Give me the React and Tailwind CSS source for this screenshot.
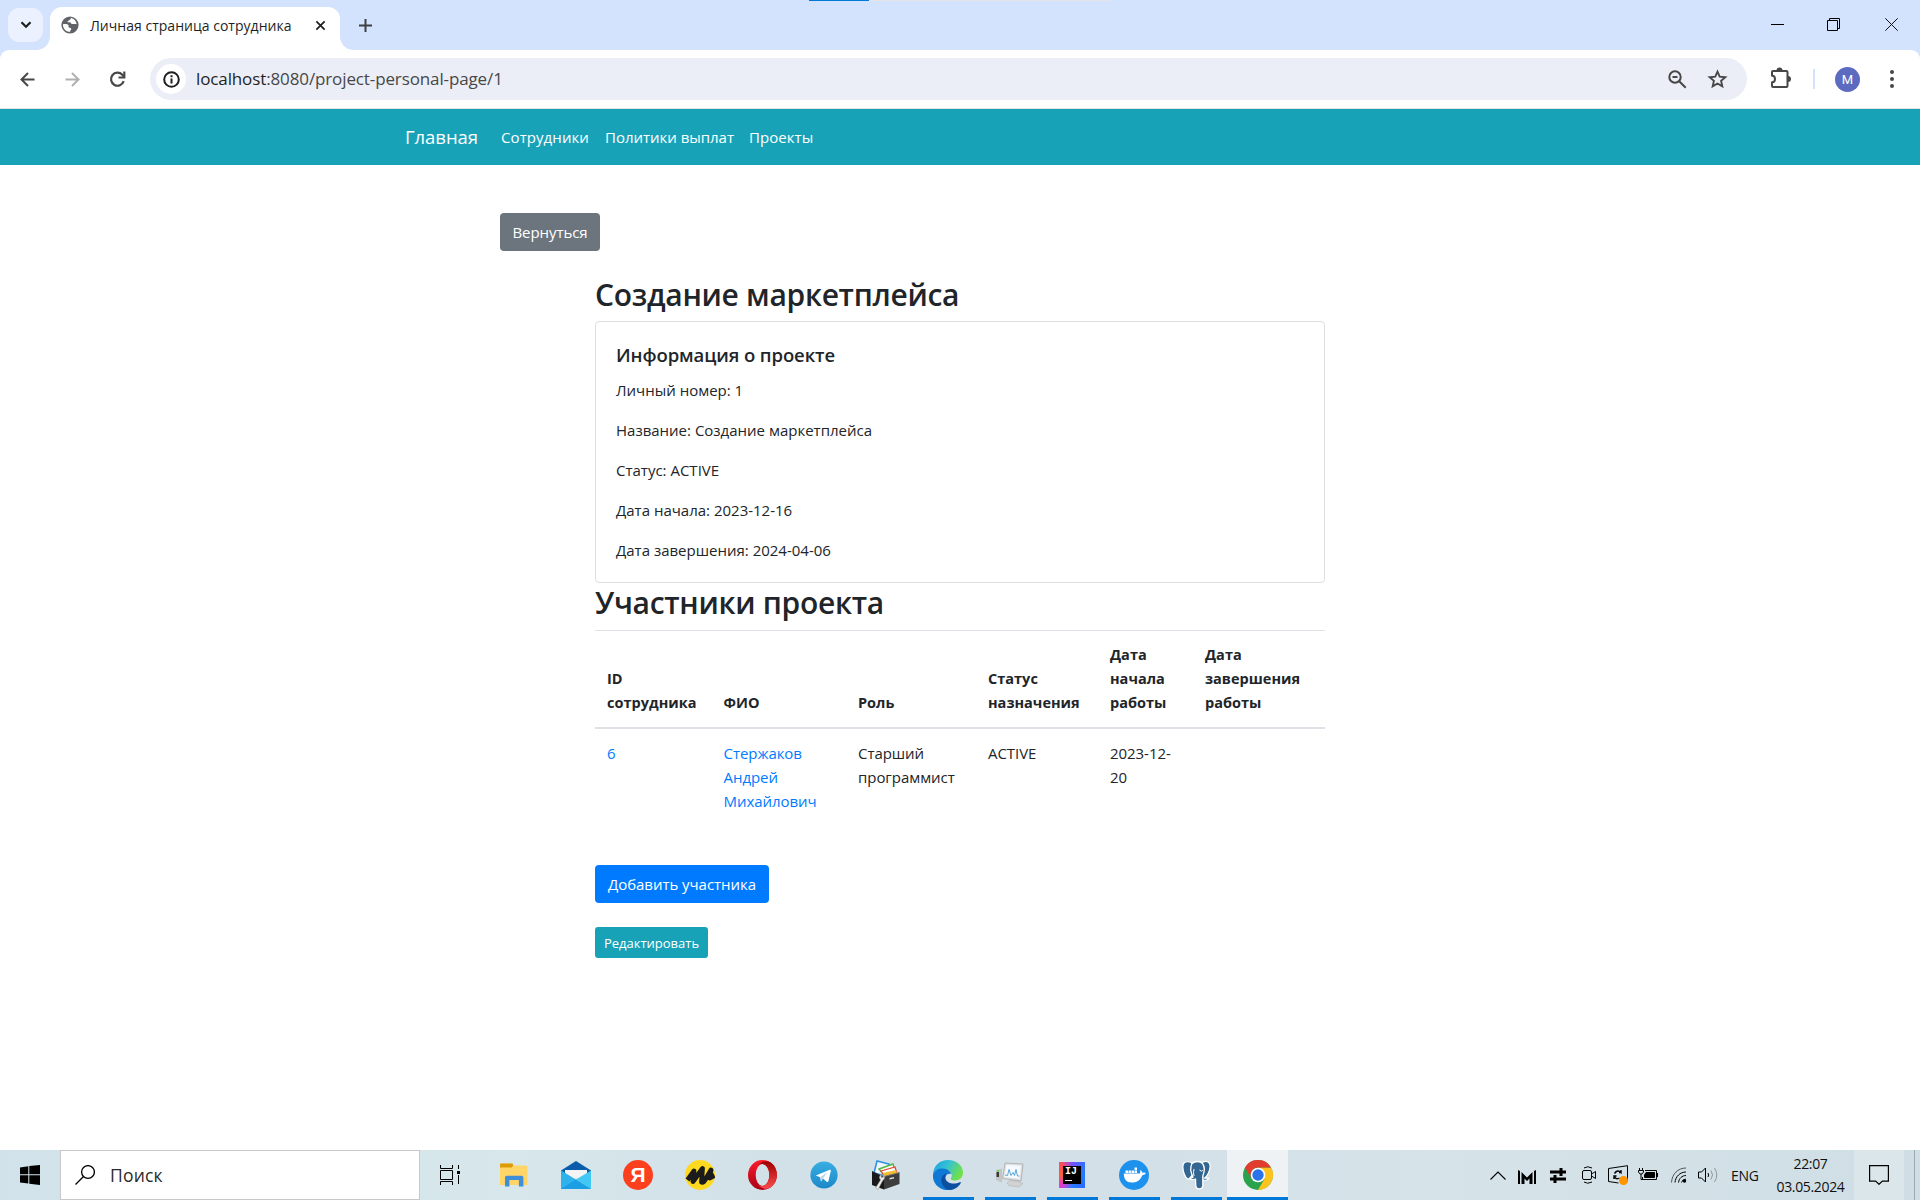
function BrowserTabs() {
  return (
    <div className="h-[50px] bg-[#d3e2fd] flex items-start relative">
      <div className="absolute left-[809px] top-0 h-px w-[301px] bg-[#e2e4e8] flex">
        <div className="w-[60px] h-px bg-[#0078d7]" />
      </div>
      <div className="shrink-0 mt-2 ml-2 w-[35px] h-[34px] rounded-[11px] bg-[#ebf1fe] flex items-center justify-center">
        <svg width="12" height="8" viewBox="0 0 12 8" fill="none" stroke="#1f1f1f" strokeWidth="2.2"><path d="M1.5 1.2 6 5.7l4.5-4.5" /></svg>
      </div>
      <svg className="shrink-0 w-[14px] h-[14px] ml-[-7px] mt-9" viewBox="0 0 14 14"><path d="M14 0v14H0C8 14 14 8 14 0Z" fill="#fff" /></svg>
      <div className="shrink-0 mt-[7px] h-[43px] w-[290px] rounded-t-[12px] bg-white flex items-center pb-[7px] pl-[11px]">
        <svg className="shrink-0" width="18" height="18" viewBox="0 0 18 18"><circle cx="9" cy="9" r="8.6" fill="#5f6368" /><path d="M9 1.8c2.6.2-.5 1.8-.8 2.6-.2.8-1.6.4-1.6 1.3 0 .8 1.5.4 2.4.6 1 .2.8 1.8 2.2 1.8 1.500 0 2.600-.6 4.500.2C15.200 5 12.700 2 9 1.800ZM2 8.200c2.300-.2 4.300-.2 5.300.8.8.9-.4 2 .6 2.600 1 .6 2.200 0 2.300 1.300.1 1-1.200 1.200-1.100 2.900C4.500 15.700 1.600 12 2 8.200Z" fill="#fff" /></svg>
        <span className="ml-[11px] w-[203px] whitespace-nowrap text-[14px] tracking-[0.02px] text-[#1f1f1f]">Личная страница сотрудника</span>
        <svg className="ml-[22px] shrink-0" width="11" height="11" viewBox="0 0 12 12" stroke="#1f1f1f" strokeWidth="1.900"><path d="m1.500 1.500 9 9m0-9-9 9" /></svg>
      </div>
      <svg className="shrink-0 w-[14px] h-[14px] mt-9" viewBox="0 0 14 14"><path d="M0 0v14h14C6 14 0 8 0 0Z" fill="#fff" /></svg>
      <svg className="ml-[5px] mt-[19px]" width="13" height="13" viewBox="0 0 13 13" stroke="#3c4043" strokeWidth="2"><path d="M6.500 0v13M0 6.500h13" /></svg>
      <div className="ml-auto mr-[22px] mt-[18px] flex items-center">
        <svg width="13" height="13" viewBox="0 0 13 13" stroke="#000"><path d="M0 6.500h13" /></svg>
        <svg className="ml-[43px]" width="13" height="13" viewBox="0 0 13 13" fill="none" stroke="#000"><path d="M.5 2.500h10v10H.5zM2.500 2.500v-2h10v10h-2" /></svg>
        <svg className="ml-[45px]" width="13" height="13" viewBox="0 0 13 13" stroke="#111"><path d="m.3.3 12.400 12.400m0-12.400L.3 12.700" /></svg>
      </div>
    </div>
  );
}

function Toolbar() {
  return (
    <div className="bg-[#d3e2fd]">
      <div className="h-[59px] bg-white rounded-t-[9px] border-b border-[#dfe1e2] flex items-center">
        <svg className="ml-5 shrink-0" width="15" height="15" viewBox="0 0 15 15" fill="none" stroke="#474747" strokeWidth="2"><path d="M14.500 7.500H1.500M8 1 1.500 7.500 8 14" /></svg>
        <svg className="ml-[30px] shrink-0" width="15" height="15" viewBox="0 0 15 15" fill="none" stroke="#b0b0b0" strokeWidth="2"><path d="M.5 7.500h13M7 1l6.500 6.500L7 14" /></svg>
        <svg className="ml-[29px] shrink-0" width="17" height="17" viewBox="0 0 17 17" fill="none" stroke="#474747" strokeWidth="2.200"><path d="M14.700 10.200A6.500 6.500 0 1 1 13.300 3.800l1.700 1.900" /><path d="M15.300.500v6H9.500" /></svg>
        <div className="ml-6 w-[1597px] shrink-0 h-[42px] rounded-full bg-[#ebeef7] flex items-center pl-[6px]">
          <div className="w-[30px] h-[30px] rounded-full bg-white flex items-center justify-center">
            <svg width="17" height="17" viewBox="0 0 17 17" fill="none" stroke="#1f1f1f" strokeWidth="2"><circle cx="8.500" cy="8.500" r="7.300" /><path d="M8.500 7.500v5M8.500 4.300v2" /></svg>
          </div>
          <span className="ml-[10px] whitespace-nowrap text-[17px] tracking-[-0.120px] text-[#474747]"><span className="text-[#1f1f1f]">localhost</span>:8080/project-personal-page/1</span>
          <svg className="ml-auto" width="19" height="19" viewBox="0 0 19 19" fill="none" stroke="#474747" strokeWidth="2"><circle cx="7" cy="7" r="5.700" /><path d="m11.200 11.200 6.500 6.500M4.500 7h5" /></svg>
          <svg className="ml-[20px] mr-[19px]" width="21" height="20" viewBox="0 0 21 20" fill="none" stroke="#474747" strokeWidth="1.900"><path d="m10.500 2.600 2.200 5.100 5.600.5-4.200 3.700 1.200 5.500-4.800-2.900-4.800 2.900 1.200-5.500-4.200-3.700 5.600-.5z" /></svg>
        </div>
        <svg className="ml-[23px] mb-[2px]" width="21" height="22" viewBox="0 0 21 22" fill="none" stroke="#474747" strokeWidth="2"><path d="M3 4h13.500q1 0 1 1v14q0 1-1 1H3q-1 0-1-1v-3.500c4-.5 4-6.500 0-7V5q0-1 1-1Z" /><path d="M6.500 3.500a3 3 0 0 1 6 0zM18 9a3 3 0 0 1 0 6z" fill="#474747" stroke="none" /></svg>
        <div className="ml-[22px] w-[2px] h-5 bg-[#d3e2fd]" />
        <div className="ml-5 w-[25px] h-[25px] rounded-full bg-[#5c6bc0] text-white text-[13px] leading-[25px] text-center font-[Roboto,sans-serif]">M</div>
        <svg className="ml-[31px] -translate-x-px" width="4" height="18" viewBox="0 0 4 18" fill="#474747"><circle cx="2" cy="2" r="2" /><circle cx="2" cy="9" r="2" /><circle cx="2" cy="16" r="2" /></svg>
      </div>
    </div>
  );
}

function NavBar() {
  return (
    <nav className="h-14 bg-[#17a2b8] text-white flex items-center pl-[405px] whitespace-nowrap">
      <a className="w-[72px] text-[18.500px] leading-[30px] tracking-[-0.050px]">Главная</a>
      <a className="ml-6 w-[89px] text-[15px] leading-6 tracking-[0.080px]">Сотрудники</a>
      <a className="ml-[15px] w-[129px] text-[15px] leading-6 tracking-[-0.020px]">Политики выплат</a>
      <a className="ml-[15px] text-[15px] leading-6 tracking-[0.050px]">Проекты</a>
    </nav>
  );
}

const INFO = ["Личный номер: 1", "Название: Создание маркетплейса", "Статус: ACTIVE", "Дата начала: 2023-12-16", "Дата завершения: 2024-04-06"];
const HEADS = ["ID сотрудника", "ФИО", "Роль", "Статус назначения", "Дата начала работы", "Дата завершения работы"];

function Page() {
  return (
    <main className="flex-1 bg-white text-[#212529] text-[15px] leading-6 pt-12">
      <button className="ml-[500px] block w-[100px] h-[38px] rounded-[4px] bg-[#6c757d] text-white whitespace-nowrap tracking-[-0.050px]">Вернуться</button>
      <div className="ml-[595px] w-[730px] pt-[23.600px]">
        <h2 className="text-[30px] leading-[40.400px] tracking-[-0.300px] font-semibold mb-1.5 whitespace-nowrap">Создание маркетплейса</h2>
        <section className="border border-[#dfdfdf] rounded-[4px] p-5">
          <h5 className="text-[18.500px] leading-[26px] tracking-[-0.100px] font-semibold mb-2.5">Информация о проекте</h5>
          <div className="flex flex-col gap-4">
            {INFO.map((t) => <p key={t}>{t}</p>)}
          </div>
        </section>
        <h2 className="text-[30px] leading-[40.400px] tracking-[-0.300px] font-semibold mb-[7px] whitespace-nowrap">Участники проекта</h2>
        <table className="w-[730px] table-fixed border-collapse">
          <colgroup>
            <col className="w-[116.500px]" /><col className="w-[134.500px]" /><col className="w-[130px]" /><col className="w-[122px]" /><col className="w-[95px]" /><col className="w-[132px]" />
          </colgroup>
          <thead>
            <tr className="border-t border-b-2 border-t-[#dee2e6] border-b-[#dee2e6]">
              {HEADS.map((h) => <th key={h} className="p-3 text-left align-bottom text-[14.500px] tracking-[0.020px] font-bold">{h}</th>)}
            </tr>
          </thead>
          <tbody>
            <tr className="align-top tracking-[-0.050px]">
              <td className="p-3 text-[#007bff]">6</td>
              <td className="p-3 text-[#007bff]">Стержаков Андрей Михайлович</td>
              <td className="p-3">Старший программист</td>
              <td className="p-3">ACTIVE</td>
              <td className="p-3">2023-12-20</td>
              <td className="p-3" />
            </tr>
          </tbody>
        </table>
        <button className="mt-10 block w-[174px] h-[38px] rounded-[4px] bg-[#007bff] text-white whitespace-nowrap tracking-[-0.050px]">Добавить участника</button>
        <button className="mt-6 block w-[113px] h-[31px] rounded-[3px] bg-[#17a2b8] text-white text-[13px] whitespace-nowrap">Редактировать</button>
      </div>
    </main>
  );
}

const Folder = () => (
  <svg width="28" height="24" viewBox="0 0 28 24"><path d="M0 1.500Q0 .5 1 .5h11l1.500 2H26q1.500 0 1.500 1.500v18H0z" fill="#ffd567" /><path d="M0 5V1.500Q0 .5 1 .5h11q1 0 1 1V3l-1.500 1.500H0z" fill="#dd9a09" /><path d="M5 23.500v-9q0-1.700 1.700-1.700h15q1.700 0 1.700 1.700v9h-4.500V17h-9.500v6.500z" fill="#3f8ed8" /></svg>
);
const Mail = () => (
  <svg width="30" height="28" viewBox="0 0 30 28"><path d="M0 9.500 15 0l15 9.500v5H0z" fill="#0b5cab" /><path d="M4 9h22v8H4z" fill="#f4f4f4" /><path d="M0 9.500V28h30L14.500 19z" fill="#1899df" /><path d="M0 9.500 15.500 19 0 28z" fill="#2fb2ec" /><path d="M30 9.500V28L15 18.500z" fill="#42c8f5" /><path d="m15 18.500 15 9.500H0z" fill="#1c9ee4" /></svg>
);
const Yandex = () => (
  <div className="w-[30px] h-[30px] rounded-full bg-[#fc3f1d] text-white font-bold text-[21px] leading-[29px] text-center font-['Liberation_Sans',sans-serif]">Я</div>
);
const Music = () => (
  <svg width="30" height="30" viewBox="0 0 30 30"><circle cx="15" cy="15" r="15" fill="#ffd91f" /><path d="M2.500 20 9 11 8 21.500 17.500 8.500 16.500 22q1.500 2 5-4.500L26 10l-1.500 8 5-2.500" fill="none" stroke="#1b1b1b" strokeWidth="4.800" strokeLinejoin="round" /></svg>
);
const Opera = () => (
  <svg width="29" height="30" viewBox="0 0 29 30"><defs><linearGradient id="op" x1="0" y1="0" x2="0" y2="1"><stop offset="0" stopColor="#ff1b2d" /><stop offset="1" stopColor="#a70014" /></linearGradient><linearGradient id="op2" x1="0" y1="0" x2="0" y2="1"><stop offset="0" stopColor="#9c0000" /><stop offset="1" stopColor="#ff4b4b" /></linearGradient></defs><path fillRule="evenodd" d="M14.500 0a14.500 15 0 1 0 0 30 14.500 15 0 1 0 0-30Zm0 4a6.800 11 0 1 1 0 22 6.800 11 0 1 1 0-22Z" fill="url(#op)" /><path d="M10 5C20-4 29 5 28.800 15S19 34 10 25c5 3 11.300-.500 11.300-10S15 2 10 5Z" fill="url(#op2)" /></svg>
);
const Telegram = () => (
  <svg width="28" height="28" viewBox="0 0 28 28"><defs><linearGradient id="tg" x1="0" y1="0" x2="0" y2="1"><stop offset="0" stopColor="#37aee2" /><stop offset="1" stopColor="#1e88c9" /></linearGradient></defs><circle cx="14" cy="14" r="13.600" fill="url(#tg)" /><path d="m5.800 14.500 14-5.700q1.300-.3 1 1.200l-2.500 10.500q-.5 1-1.600.3L13 17.600l-2 2.800-.9-4.200z" fill="#fff" /><path d="m10.500 16 7-5-4.500 6.500-2 2.800z" fill="#b9d8ec" /></svg>
);
const Tools = () => (
  <svg width="28" height="30" viewBox="0 0 28 30"><path d="m5 1 12 3-3 12-12-3z" fill="#eef6ff" stroke="#2d8fe0" strokeWidth="1.500" /><path d="m7 9 14-5 2 7-11 4z" fill="#f6fff2" stroke="#53b548" strokeWidth="1.400" /><path d="m9 11 14-4 1.500 5-12 4z" fill="#fff" stroke="#e6442e" strokeWidth="1.300" /><path d="m11 13 13-3 1 4-13 3z" fill="#f7bd2b" /><path d="m0 11 12 6v12.500L0 25z" fill="#191919" /><path d="m12 16.500 15.500-4V24L12 29.500z" fill="#3d3d3d" /><path d="m12 16.500 15.500-4" stroke="#777" /><path d="m17.500 18 4.500-1v1.500l-4.500 1z" fill="#ddd" /><path d="M3.500 28 8.500 20q-2.500-3 .5-5.500l.5 3 2-.5-.5-2.500q3.500 3-.5 6.500L6 29.500z" fill="#ececec" stroke="#888" strokeWidth=".5" /></svg>
);
const Edge = () => (
  <svg width="30" height="30" viewBox="0 0 30 30"><defs><linearGradient id="e1" x1="0" y1="0" x2="1" y2=".4"><stop offset="0" stopColor="#1b9de2" /><stop offset=".5" stopColor="#35c1d6" /><stop offset="1" stopColor="#6fe04c" /></linearGradient></defs><path d="M0 14C1 5 7 0 15 0c9 0 15 6 15 12.500 0 5-3.500 8-8 8-3.500 0-4.500-1.500-4-2.500 1-1.500 1-3.500 0-5C15 8 5 7 0 14Z" fill="url(#e1)" /><path d="M0 14c2-4 6-6 10-5.500 4 .3 7.500 2.500 8.300 5.500-2-1-5 0-6 3-1 5 3 11 10 10.500Q19 30 15 30C6 30-1 23 0 14Z" fill="#0f78d4" /><path d="M12.800 13.500c-2.500 1-5 4-4.300 8 .7 4.500 4 8 8 8.400 5 0 9-3 11.300-7 .2-.7-.4-1-1-.7-6 3-14.500.8-14.500-5q0-2.300.5-3.700Z" fill="#0c4f9e" /></svg>
);
const Monitor = () => (
  <svg width="28" height="26" viewBox="0 0 28 26"><path d="m0 8 6-1.500v14L0 18z" fill="#c4c4c4" /><path d="M.5 10H3v5H.5z" fill="#3a3a3a" /><path d="M1 8h2v1.500H1z" fill="#4ee02d" /><path d="m9 1 18 1-2 17L6.500 16.500z" fill="#e0e0e0" stroke="#a8a8a8" strokeWidth=".8" /><path d="m10.500 3 14.500.7-1.500 13L8.500 15z" fill="#f4faff" /><path d="m9 13 2.500.5L13 7.500l2 6 2-3 1.500 3 1.500-6 1.500 6.500h2" fill="none" stroke="#5aa9d8" /><path d="m11 21 3-2.500 8 .8 5 2.200-4 3.500-10-1.500z" fill="#d2d2d2" stroke="#aaa" strokeWidth=".5" /></svg>
);
const Idea = () => (
  <div className="w-[26px] h-[26px] bg-[conic-gradient(from_0deg,#7b4dff,#3b6bff,#1f7cff,#2a6cff,#2a7cff,#e33bd0,#fc6030,#ff4d5d,#7b4dff)] p-[4px]">
    <div className="w-[18px] h-[18px] bg-black text-white font-bold font-['Liberation_Mono',monospace] text-[10px] leading-[11px] pl-[2px]">IJ
      <div className="w-[7px] h-px mt-[3px] bg-white" />
    </div>
  </div>
);
const Docker = () => (
  <svg width="30" height="30" viewBox="0 0 30 30"><circle cx="15" cy="15" r="15" fill="#1d91ee" /><path d="M4.800 13.500h16q1-1.500.3-3.500 2 .8 2.300 2.700 2-.5 3.600.4-1 2-3.600 2.100C21 20.500 17.500 22.500 12.500 22.500q-8 0-7.700-9Z" fill="#fff" /><path d="M6.500 10.500h2.500V13H6.500zm3 0H12V13H9.500zm3 0H15V13h-2.500zm3 0H18V13h-2.500zm0-3H18V10h-2.500z" fill="#fff" /></svg>
);
const Postgres = () => (
  <svg width="29" height="30" viewBox="0 0 29 30" fill="#336791" stroke="#fff" strokeWidth="1.300" strokeLinejoin="round"><path d="M10 3C5 0 .6 2 .8 7c.2 5 2.500 11 5 12 2 .5 3-2.500 4.500-4z" /><path d="M19 3c5-3.500 9.500-1 9.200 3.500C28 11 25 17 22.500 18l4.500.3q-2 2.500-6 2z" /><path d="M10 3.500C13 .8 18 .8 20.500 3.500 23 7 22.500 12 20.800 16v10c-.5 4-6.500 4-7 0l-.3-7q-4 1.500-6-.5l3.500-1.200C8.500 12 8 7 10 3.500Z" /><path d="M17.500 10q2 2 3.300.5M12 9q-1 4 0 7" fill="none" strokeWidth="1" /></svg>
);
const Chrome = () => (
  <svg width="30" height="30" viewBox="0 0 30 30"><circle cx="15" cy="15" r="15" fill="#2ba24c" /><path d="M15 7.500h13A15 15 0 0 1 15 30l6.500-11z" fill="#fcc31e" /><path d="M2 7.500a15 15 0 0 1 26 0H15A7.500 7.500 0 0 0 8.500 18.700z" fill="#e33b2e" /><circle cx="15" cy="15" r="7.300" fill="#fff" /><circle cx="15" cy="15" r="5.700" fill="#2a73e8" /></svg>
);
const TaskView = () => (
  <svg width="20" height="20" viewBox="0 0 20 20" fill="none" stroke="#000"><path d="M.5 0v3.500h12V0M.5 20v-3.500h12V20M.5 5.500h12v9H.5zM18.500 0v4M18.500 10v9" /><path d="M17 6h3v3h-3z" fill="#000" stroke="none" /></svg>
);

const APPS = [
  { Icon: Folder }, { Icon: Mail }, { Icon: Yandex }, { Icon: Music }, { Icon: Opera }, { Icon: Telegram }, { Icon: Tools },
  { Icon: Edge, open: true }, { Icon: Monitor, open: true }, { Icon: Idea, open: true }, { Icon: Docker, open: true }, { Icon: Postgres, open: true }, { Icon: Chrome, active: true },
];

function Tray() {
  return (
    <div className="ml-auto flex items-center h-full">
      <svg width="16" height="9" viewBox="0 0 16 9" fill="none" stroke="#000" strokeWidth="1.100"><path d="m.5 8.500 7.500-7.500 7.500 7.500" /></svg>
      <svg className="ml-3 mt-1" width="18" height="14" viewBox="0 0 18 14" fill="#000"><path d="M0 0l2 1v13H0zM3.500 2 9 7.500 14.500 2v12h-3V8.500L9 11 6.500 8.500V14h-3zM18 0l-2 1v13h2z" /></svg>
      <svg className="ml-[13px]" width="18" height="15" viewBox="0 0 18 15" stroke="#000" strokeWidth="3"><path d="M1 4h16M1 11h16" /><path d="M12 0v8M6 7v8" /></svg>
      <svg className="ml-[15px]" width="14" height="18" viewBox="0 0 14 18" fill="none" stroke="#000"><rect x=".5" y="4.500" width="9" height="9" rx="1.500" /><path d="m9.500 8 4-2.500v7l-4-2.500M2 2Q5.500-.5 10 2M2 16q3.500 2.500 8 0" /></svg>
      <svg className="ml-3" width="21" height="20" viewBox="0 0 21 20" fill="none" stroke="#000"><path d="M.5 3.500 19.500.7v15.500M.5 3.500v13l10 1.500" /><path d="M6.500 8.500Q9.500 4 13 7.500V5M13.500 7.500H11M6 14v-3h2.500M6.500 11.500q1.500 3.500 5 1.500" strokeWidth="1.400" /><circle cx="15.500" cy="15.500" r="4.500" fill="#ff9500" stroke="none" /></svg>
      <svg className="ml-[9px]" width="20" height="14" viewBox="0 0 20 14" fill="none" stroke="#000"><path d="M7 2.500h11.500v9h-14V9" /><path d="M8 4.500h8.500v5h-10V7z" fill="#000" /><path d="M19.500 5v4M1.500 0v2M4.500 0v2M.5 2.500h5V4L4 6H2L.5 4zM3 6v5.500h2" /></svg>
      <svg className="ml-[13px]" width="16" height="16" viewBox="0 0 16 16" fill="none" stroke="#000"><path d="M.5 15.500C1 7 7 1 15 1" stroke="#555" /><path d="M4 15.500C4.500 9.500 9 5 15 5M7.500 15.500C8 11.500 11 8.500 15 8.500M10.500 15.500q.5-3 4.500-3.500" /><circle cx="13.500" cy="14" r="1.700" fill="#000" stroke="none" /></svg>
      <svg className="ml-[11px]" width="20" height="18" viewBox="0 0 20 18" fill="none" stroke="#000"><path d="M.5 6h3L7.500 2v14l-4-4h-3z" /><path d="M10 7q1.200 2 0 4" /><path d="M13 4.500q3 4.500 0 9M16.500 2q4.500 7 0 14" stroke="#8d999d" /></svg>
      <span className="ml-[13px] w-[29px] text-[14px] tracking-[-0.250px] text-[#111]">ENG</span>
      <div className="ml-[15px] w-[71px] text-center text-[14px] leading-[23px] tracking-[-0.350px] text-[#111] whitespace-nowrap">
        <div>22:07</div><div>03.05.2024</div>
      </div>
      <div className="ml-2 w-[50px] h-full bg-[#dbe6eb] flex items-center justify-center">
        <svg width="20" height="20" viewBox="0 0 20 20" fill="none" stroke="#000" strokeWidth="1.200"><path d="M.6.6h18.800v15.500h-6L10 19.300l-3.400-3.200h-6z" /></svg>
      </div>
      <div className="ml-[10px] mr-[5px] w-px h-full bg-[#9fabb1]" />
    </div>
  );
}

function Taskbar() {
  return (
    <footer className="h-[50px] flex items-center bg-[linear-gradient(90deg,#d2e2ea_0%,#d5e6eb_20%,#d7e7eb_27%,#d2e0e8_40%,#d4e0e8_60%,#d6e3e9_75%,#cfdee5_100%)]">
      <div className="w-[60px] flex justify-center">
        <svg width="20" height="20" viewBox="0 0 20 20"><path d="M0 2.500 8.300 1.300v7.900H0zM9.300 1.100 20 0v9.200H9.300zM0 10.200h8.300v8.300L0 17.500zM9.300 10.200H20V20L9.300 18.700z" /></svg>
      </div>
      <div className="w-[360px] h-[50px] bg-white border border-[#c6c8c9] flex items-center pl-[14px]">
        <svg width="20" height="20" viewBox="0 0 20 20" fill="none" stroke="#000" strokeWidth="1.300"><circle cx="13" cy="7" r="6.400" /><path d="M8.500 11.500.5 19.500" /></svg>
        <span className="ml-[15px] text-[17.500px] tracking-[0.200px] text-[#2b2b2b]">Поиск</span>
      </div>
      <div className="w-[60px] mr-[3px] h-full pb-0 flex items-center justify-center"><TaskView /></div>
      {APPS.map(({ Icon, open, active }, i) => (
        <div key={i} className={active ? "w-[61px] h-full flex flex-col items-center bg-[#eef2f5]" : "w-[62px] h-full flex flex-col items-center"}>
          <div className="h-[47px] pt-[3px] flex items-center"><Icon /></div>
          {open && <div className="w-[51px] h-[3px] bg-[#0078d7]" />}
          {active && <div className="w-full h-[3px] bg-[#0078d7]" />}
        </div>
      ))}
      <Tray />
    </footer>
  );
}

export default function App() {
  return (
    <div className="w-[1920px] h-[1200px] overflow-hidden flex flex-col bg-white font-['Open_Sans','Noto_Sans',sans-serif]">
      <BrowserTabs />
      <Toolbar />
      <NavBar />
      <Page />
      <Taskbar />
    </div>
  );
}
